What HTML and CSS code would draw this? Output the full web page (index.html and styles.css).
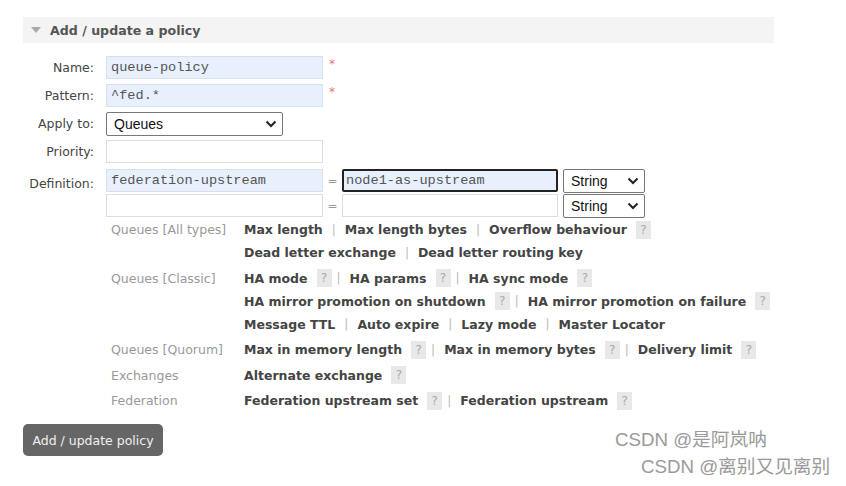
FILE: index.html
```html
<!DOCTYPE html>
<html>
<head>
<meta charset="utf-8">
<link rel="stylesheet" href="styles.css">
</head>
<body>
<div class="section">
  <div class="section-head"><span class="tri"></span><h2>Add / update a policy</h2></div>
  <div class="form">
    <div class="lbl">Name:</div>
    <div class="field"><input class="in auto" value="queue-policy"><span class="req">*</span></div>
    <div class="lbl">Pattern:</div>
    <div class="field"><input class="in auto" value="^fed.*"><span class="req">*</span></div>
    <div class="lbl">Apply to:</div>
    <div class="field"><div class="sel sel-apply"><span>Queues</span><svg width="12" height="8" viewBox="0 0 12 8"><path d="M1.5 1.5 L6 6 L10.5 1.5" fill="none" stroke="#222" stroke-width="2"/></svg></div></div>
    <div class="lbl">Priority:</div>
    <div class="field"><input class="in" value=""></div>
    <div class="lbl lbl-def">Definition:</div>
    <div class="defs">
      <div class="def-row">
        <input class="in auto" value="federation-upstream"><span class="eq">=</span><input class="in val auto focus" value="node1-as-upstream">
        <div class="sel sel-type"><span>String</span><svg width="12" height="8" viewBox="0 0 12 8"><path d="M1.5 1.5 L6 6 L10.5 1.5" fill="none" stroke="#222" stroke-width="2"/></svg></div>
      </div>
      <div class="def-row">
        <input class="in" value=""><span class="eq">=</span><input class="in val" value="">
        <div class="sel sel-type"><span>String</span><svg width="12" height="8" viewBox="0 0 12 8"><path d="M1.5 1.5 L6 6 L10.5 1.5" fill="none" stroke="#222" stroke-width="2"/></svg></div>
      </div>
      <div class="help">
        <div class="cat">Queues [All types]</div>
        <div class="links">
          <div class="line"><b>Max length</b><i>|</i><b>Max length bytes</b><i>|</i><b>Overflow behaviour</b><em>?</em></div>
          <div class="line"><b>Dead letter exchange</b><i>|</i><b>Dead letter routing key</b></div>
        </div>
        <div class="cat">Queues [Classic]</div>
        <div class="links">
          <div class="line"><b>HA mode</b><em>?</em><i>|</i><b>HA params</b><em>?</em><i>|</i><b>HA sync mode</b><em>?</em></div>
          <div class="line"><b>HA mirror promotion on shutdown</b><em>?</em><i>|</i><b>HA mirror promotion on failure</b><em>?</em></div>
          <div class="line"><b>Message TTL</b><i>|</i><b>Auto expire</b><i>|</i><b>Lazy mode</b><i>|</i><b>Master Locator</b></div>
        </div>
        <div class="cat">Queues [Quorum]</div>
        <div class="links">
          <div class="line"><b>Max in memory length</b><em>?</em><i>|</i><b>Max in memory bytes</b><em>?</em><i>|</i><b>Delivery limit</b><em>?</em></div>
        </div>
        <div class="cat">Exchanges</div>
        <div class="links">
          <div class="line"><b>Alternate exchange</b><em>?</em></div>
        </div>
        <div class="cat">Federation</div>
        <div class="links">
          <div class="line"><b>Federation upstream set</b><em>?</em><i>|</i><b>Federation upstream</b><em>?</em></div>
        </div>
      </div>
    </div>
  </div>
  <button class="btn">Add / update policy</button>
</div>
<div class="wm">
  <div class="wm1">CSDN @是阿岚呐</div>
  <div class="wm2">CSDN @离别又见离别</div>
</div>
</body>
</html>
```
FILE: styles.css
```css
html, body { margin: 0; padding: 0; background: #fff; }
body {
  font-family: "DejaVu Sans", Verdana, sans-serif;
  font-size: 12px;
  color: #444;
  position: relative;
  width: 846px;
  height: 486px;
  overflow: hidden;
}
.section { padding-top: 17px; }
.section-head {
  margin-left: 23px;
  width: 751px;
  height: 26px;
  background: #f4f4f4;
  display: flex;
  align-items: center;
}
.tri {
  width: 0; height: 0;
  margin-left: 8px;
  border-left: 5px solid transparent;
  border-right: 5px solid transparent;
  border-top: 6px solid #aaa;
}
.section-head h2 {
  margin: 0 0 0 9px;
  font-size: 12.6px;
  font-weight: bold;
  color: #555;
}
.form {
  display: grid;
  grid-template-columns: 94px auto;
  column-gap: 12px;
  row-gap: 6px;
  margin-top: 13px;
  align-items: center;
}
.lbl {
  text-align: right;
  font-size: 12.5px;
  color: #444;
}
.lbl-def { align-self: start; margin-top: 8px; }
.field { display: flex; align-items: center; height: 22px; }
.in {
  box-sizing: border-box;
  width: 217px;
  height: 23px;
  border: 1px solid #ddd;
  background: #fff;
  font-family: "Liberation Mono", monospace;
  font-size: 13.6px;
  color: #555;
  padding: 0 4px;
  margin: 0;
  outline: none;
}
.in.auto { background: #e8f0fe; border-color: #d8e0ee; }
.in.focus { border: 2px solid #222; border-radius: 2px; padding: 0 2px; }
.req { color: #e77; margin-left: 6px; font-size: 12px; position: relative; top: -3px; }
.sel {
  box-sizing: border-box;
  display: flex;
  align-items: center;
  justify-content: space-between;
  border: 1px solid #777;
  border-radius: 2px;
  background: #fff;
  font-family: "Liberation Sans", Arial, sans-serif;
  font-size: 14px;
  color: #111;
  padding: 0 5px 0 7px;
}
.sel-apply { width: 177px; height: 24px; margin-top: 2px; }
.sel-type { width: 82px; height: 24px; margin-left: 5px; }
.defs { display: flex; flex-direction: column; }
.def-row { display: flex; align-items: center; height: 25px; }
.eq { color: #999; width: 19px; text-align: center; font-size: 12px; }
.in.val { width: 216px; }
.help {
  display: grid;
  grid-template-columns: 133px auto;
  margin-top: 0;
  padding-left: 5px;
  row-gap: 2.5px;
}
.cat { color: #999; font-size: 12.5px; line-height: 23px; }
.links { display: flex; flex-direction: column; }
.line {
  display: flex;
  align-items: center;
  height: 23px;
  white-space: nowrap;
}
.line b { font-weight: bold; font-size: 12.5px; color: #444; }
.line i { font-style: normal; color: #bbb; margin: 0 9px; font-size: 12px; }
.line em + i { margin-left: 5px; }
.line em {
  font-style: normal;
  background: #e8e8e8;
  color: #aaa;
  font-size: 12px;
  width: 15px;
  height: 18px;
  line-height: 18px;
  text-align: center;
  margin-left: 9px;
}
.btn {
  display: block;
  margin: 12px 0 0 23px;
  width: 140px;
  height: 32px;
  background: #666;
  color: #f0f0f0;
  border: none;
  border-radius: 5px;
  font-family: "DejaVu Sans", Verdana, sans-serif;
  font-size: 12.5px;
  padding: 0;
}
.wm {
  position: absolute;
  left: 615px;
  top: 426px;
  font-family: "Liberation Sans", "Noto Sans CJK SC", sans-serif;
  font-size: 18.7px;
  color: #9a9a9a;
  line-height: 27px;
}
.wm2 { margin-left: 26px; }
```
